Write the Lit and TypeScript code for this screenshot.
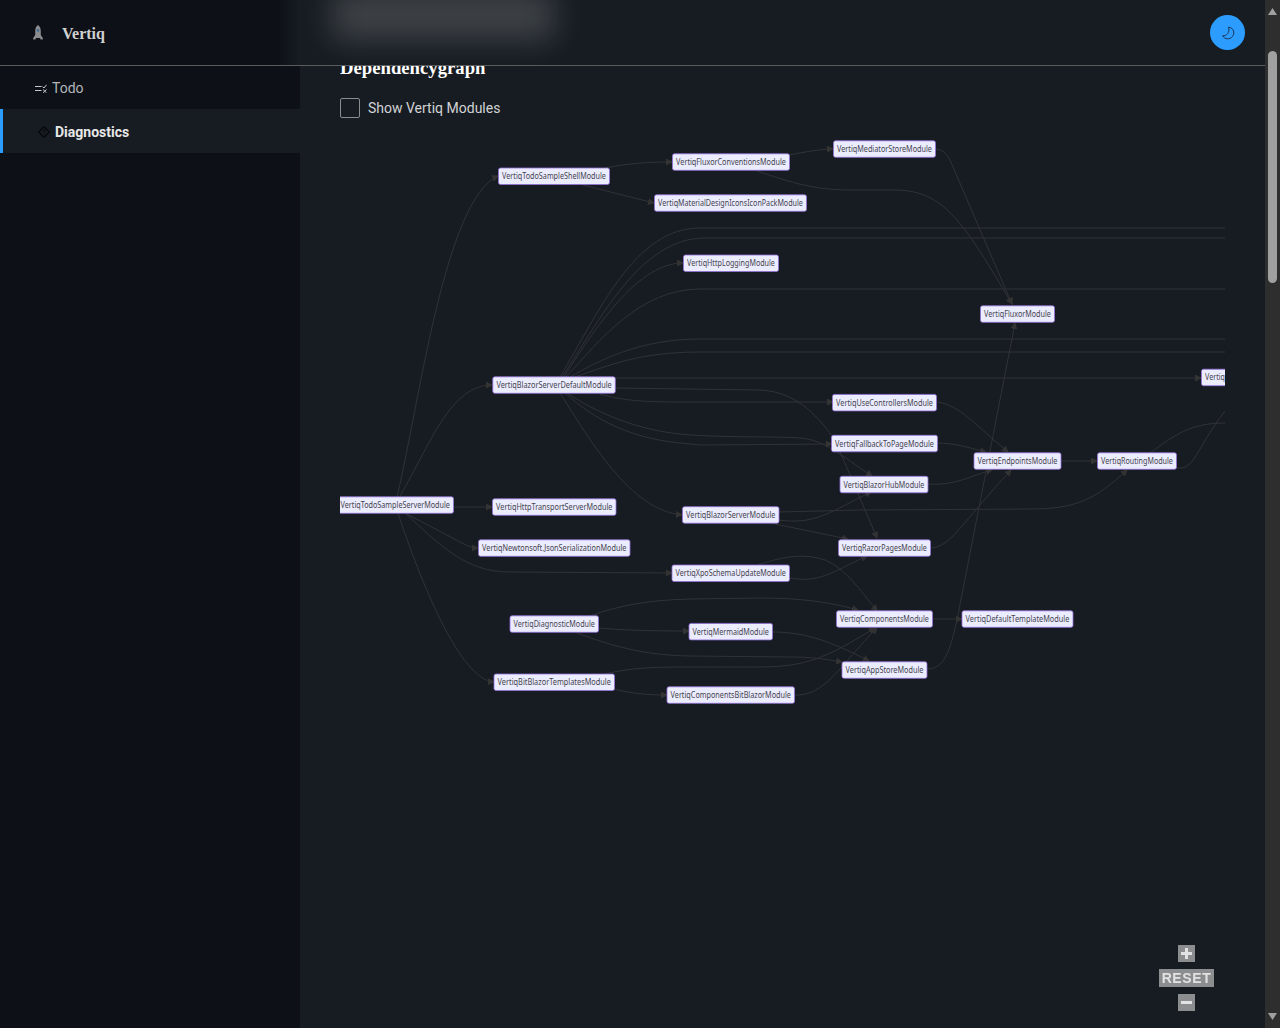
import { LitElement, html, css, svg } from "lit";
import { customElement } from "lit/decorators.js";

type N = [string, number, number, number, number];
const NODES: N[] = [
  ["VertiqTodoSampleShellModule", 498.5, 168, 111, 16.5],
  ["VertiqFluxorConventionsModule", 672.5, 153.8, 117, 16.5],
  ["VertiqMaterialDesignIconsIconPackModule", 654.5, 194.8, 152, 16.5],
  ["VertiqMediatorStoreModule", 833.5, 140.8, 102, 16.5],
  ["VertiqHttpLoggingModule", 683.5, 255, 95, 16.5],
  ["VertiqFluxorModule", 980.5, 305.8, 74, 16.5],
  ["VertiqBlazorServerDefaultModule", 492.8, 376.8, 122.5, 16.5],
  ["VertiqUseControllersModule", 832.5, 394.4, 104, 16.5],
  ["VertiqFallbackToPageModule", 831.5, 435.3, 106, 16.5],
  ["VertiqBlazorHubModule", 840, 476.3, 88, 16.5],
  ["VertiqEndpointsModule", 974, 452.8, 87, 16.5],
  ["VertiqRoutingModule", 1097.5, 452.8, 79, 16.5],
  ["VertiqTodoSampleServerModule", 337, 496.8, 116.5, 16.5],
  ["VertiqHttpTransportServerModule", 492.5, 498.8, 123.5, 16.5],
  ["VertiqBlazorServerModule", 682.5, 506.7, 96.5, 16.5],
  ["VertiqNewtonsoft.JsonSerializationModule", 478.5, 539.8, 151.5, 16.5],
  ["VertiqRazorPagesModule", 838.5, 539.8, 92, 16.5],
  ["VertiqXpoSchemaUpdateModule", 672, 565, 117.5, 16.5],
  ["VertiqDiagnosticModule", 510, 615.8, 88.5, 16.5],
  ["VertiqComponentsModule", 836.5, 610.8, 96, 16.5],
  ["VertiqDefaultTemplateModule", 962, 610.8, 111, 16.5],
  ["VertiqMermaidModule", 689, 623.4, 83.5, 16.5],
  ["VertiqAppStoreModule", 842, 661.8, 85, 16.5],
  ["VertiqBitBlazorTemplatesModule", 494, 674, 120.5, 16.5],
  ["VertiqComponentsBitBlazorModule", 667, 686.8, 127.5, 16.5],
];

const EDGES: string[] = [
  "M397 497C420 400 445 200 498 176",
  "M400 496C430 445 450 385 492 385",
  "M453 507L492 507",
  "M405 513L462 543Q470 548 478 548",
  "M405 513C440 545 465 572 510 572L672 573",
  "M398 513C420 580 460 680 494 682",
  "M605 168C630 163 650 162 672 162",
  "M583 185L654 203",
  "M789 155C805 152 820 149 833 149",
  "M757 171C785 180 810 190 850 190L895 190C945 190 965 225 1012 304",
  "M935 149Q945 149 950 160L1012 304",
  "M564 377C600 320 640 263 683 263",
  "M615 378L1201 378",
  "M600 394C620 400 640 402 680 402L833 402",
  "M615 388L760 390C800 392 820 420 835 440L877 538",
  "M567 393C600 415 640 430 680 434C720 438 770 436 800 438C825 440 840 455 872 476",
  "M565 393C595 420 630 438 680 443L700 445L832 444",
  "M560 393C590 440 630 510 682 515",
  "M779 512L860 510L1030 509C1075 509 1095 500 1127 470",
  "M779 520C815 525 830 512 871 492",
  "M770 523L848 539",
  "M928 484C955 486 970 476 992 470",
  "M789 578C820 583 830 573 867 556",
  "M757 565C780 558 800 552 825 560C845 568 860 590 877 611",
  "M930 548C950 548 960 525 1011 470",
  "M937 402C960 405 975 425 1008 452",
  "M937 443C955 443 970 448 986 452",
  "M1061 461L1097 461",
  "M927 669C945 669 950 650 957 620L1015 323",
  "M932 619L962 619",
  "M590 616C620 605 650 600 690 599L760 598C800 598 830 602 858 610",
  "M598 628C620 630 650 631 689 631",
  "M577 633C610 645 640 655 690 656L790 657C810 657 825 659 842 662",
  "M772 632C800 632 825 638 869 661",
  "M605 674C630 668 650 667 690 667L760 667C810 667 830 655 875 628",
  "M614 689C630 693 645 695 667 695",
  "M794 695C825 697 840 665 877 628",
];
const OPEN_EDGES: string[] = [
  "M1150 453C1175 435 1190 423 1225 423",
  "M1177 468C1195 470 1195 450 1225 411",
  "M560 377C600 310 635 228 700 228L1225 228",
  "M562 377C600 320 640 238 705 238L1225 238",
  "M566 377C600 340 640 289 700 289L1225 289",
  "M570 377C600 360 640 339 700 339L1225 339",
  "M575 377C610 365 640 352 700 352L1225 352",
];

@customElement("app-root")
export class AppRoot extends LitElement {
  static styles = css`
    :host { display: flex; width: 1280px; height: 1028px; overflow: hidden; background: #171c22; font-family: Roboto, "Noto Sans", sans-serif; }
    .page { flex: 1; min-width: 0; display: flex; flex-direction: column; }
    header { position: relative; z-index: 2; flex: 0 0 66px; height: 66px; box-sizing: border-box; display: flex; align-items: center; overflow: hidden; border-bottom: 1px solid #5a5c5e; background: #171c22; }
    .brand { position: relative; z-index: 1; flex: 0 0 300px; height: 100%; display: flex; align-items: center; box-sizing: border-box; padding: 0 0 0 33px; gap: 19px; background: linear-gradient(90deg, #0d1117 278px, #171c22 300px); }
    .brand svg { display: block; }
    .brand b { font: bold 16px "Liberation Serif", serif; color: #d0d0d0; position: relative; top: 1px; }
    .blob { position: absolute; left: 332px; top: -10px; width: 222px; height: 50px; background: rgba(255,255,255,.17); filter: blur(15px); }
    .moon { position: absolute; right: 20px; top: 15px; width: 35px; height: 35px; border-radius: 50%; background: #2d9cff; display: flex; align-items: center; justify-content: center; }
    .body { flex: 1; min-height: 0; display: flex; position: relative; }
    nav { flex: 0 0 300px; background: #0d1117; }
    .item { height: 43px; display: flex; align-items: center; box-sizing: border-box; color: #b4b6b9; font-size: 14px; padding-top: 1px; }
    .item.todo { padding-left: 35px; gap: 5px; }
    .item.active { height: 44px; background: #171c22; border-left: 3px solid #2d9cff; padding-left: 35px; gap: 5px; color: #e8e8e8; font-weight: 700; font-size: 14px; }
    main { flex: 1; min-width: 0; padding: 0 40px; position: relative; }
    h1 { margin: -10px 0 0; font: bold 18.72px/24px "Liberation Serif", serif; color: #fff; }
    .check { margin-top: 18px; display: flex; align-items: center; gap: 8px; color: #d2d3d5; font-size: 14px; height: 20px; }
    .box { width: 20px; height: 20px; box-sizing: border-box; border: 1px solid #8a8c8e; border-radius: 2px; }
    .graph { position: absolute; left: 40px; top: 0; width: 885px; height: 962px; overflow: hidden; }
    .graph svg { display: block; }
    .zoom { position: absolute; right: 51px; bottom: 17px; display: flex; flex-direction: column; align-items: center; gap: 7px; filter: blur(.3px); }
    .zbtn { background: #8b8d8f; color: #e2e2e2; display: flex; align-items: center; justify-content: center; }
    .zbtn.sq { width: 17px; height: 17px; }
    .zbtn.reset { width: 55px; height: 18px; font: bold 14px "Liberation Sans", sans-serif; letter-spacing: .6px; }
    .scroll { flex: 0 0 15px; background: #2e2e2e; position: relative; }
    .arrow { position: absolute; left: 3px; }
    .arrow.up { top: 8px; }
    .arrow.down { bottom: 8px; }
    .thumb { position: absolute; left: 3px; top: 51px; width: 9px; height: 232px; border-radius: 5px; background: #a0a0a0; }
    .node-text { font-family: "Noto Sans", sans-serif; font-size: 8.2px; fill: #44444c; }
  `;

  private graph() {
    const ox = 340, oy = 66;
    return html`<svg width="885" height="962" viewBox="${ox} ${oy} 885 962" xmlns="http://www.w3.org/2000/svg">
      <defs>
        <marker id="ah" markerUnits="userSpaceOnUse" markerWidth="7" markerHeight="7" refX="6" refY="3.5" orient="auto">
          <path d="M0 0L7 3.5L0 7Z" fill="#333"></path>
        </marker>
      </defs>
      ${EDGES.map((d) => svg`<path d=${d} fill="none" stroke="#303236" stroke-width="1" marker-end="url(#ah)"></path>`)}
      ${OPEN_EDGES.map((d) => svg`<path d=${d} fill="none" stroke="#303236" stroke-width="1"></path>`)}
      ${NODES.map(([t, x, y, w, h]) => svg`
        <rect x=${x} y=${y} width=${w} height=${h} rx="2" fill="#ececff" stroke="#9370db" stroke-width=".8"></rect>
        <text class="node-text" x=${x + 3.6} y=${y + 11.2} textLength=${w - 7.2} lengthAdjust="spacingAndGlyphs">${t}</text>`)}
      <rect x="1201.5" y="369.2" width="60" height="16.5" rx="2" fill="#ececff" stroke="#9370db" stroke-width=".8"></rect>
      <text class="node-text" x="1205" y="380.4" textLength="20" lengthAdjust="spacingAndGlyphs">Vertiq</text>
    </svg>`;
  }

  render() {
    return html`
      <div class="page">
        <header>
          <div class="brand">
            <svg width="10" height="15" viewBox="0 0 10 15">
              <path d="M5 0C7 1.4 7.8 3.6 7.8 6V10L9.8 13V14.5H7.6L7 13H3L2.4 14.5H.2V13L2.2 10V6C2.2 3.6 3 1.4 5 0Z" fill="#8a8c8e"></path>
              <circle cx="5" cy="5.4" r="1.3" fill="#3f6d96"></circle>
            </svg>
            <b>Vertiq</b>
          </div>
          <div class="blob"></div>
          <div class="moon">
            <svg width="14" height="14" viewBox="0 0 14 14" fill="none" stroke="#1a3555" stroke-width="1">
              <path d="M7.5 1.2C11 1.4 13 4 12.8 7C12.6 10.4 9.8 12.9 6.6 12.8C4.4 12.7 2.6 11.6 1.6 9.8C5.6 10.4 9.2 6.2 7.5 1.2Z"></path>
            </svg>
          </div>
        </header>
        <div class="body">
          <nav>
            <div class="item todo">
              <svg width="12" height="9" viewBox="0 0 12 9" fill="none" stroke="#c4c6c8" stroke-width="1">
                <path d="M0 2.5H6.5M0 6.5H6.5M7.5 2.5L9 4L11.5 .8M8 5.5L11.5 8.8M11.5 5.5L8 8.8"></path>
              </svg>
              <span>Todo</span>
            </div>
            <div class="item active">
              <svg width="12" height="12" viewBox="0 0 12 12" fill="none" stroke="#05070a" stroke-width="1.1">
                <path d="M6 .6L11.4 6L6 11.4L.6 6Z"></path>
                <path d="M4.8 4.7C5 3.6 7.2 3.6 7.2 4.9C7.2 5.8 6 5.8 6 6.9M6 7.6V8.4" stroke-width=".7"></path>
              </svg>
              <span>Diagnostics</span>
            </div>
          </nav>
          <main>
            <div class="graph">${this.graph()}</div>
            <h1>Dependencygraph</h1>
            <div class="check"><span class="box"></span><span>Show Vertiq Modules</span></div>
            <div class="zoom">
              <div class="zbtn sq">
                <svg width="13" height="13" viewBox="0 0 13 13"><path d="M5 1H8V5H12V8H8V12H5V8H1V5H5Z" fill="#e2e2e2"></path></svg>
              </div>
              <div class="zbtn reset">RESET</div>
              <div class="zbtn sq">
                <svg width="13" height="13" viewBox="0 0 13 13"><path d="M1 5H12V8H1Z" fill="#e2e2e2"></path></svg>
              </div>
            </div>
          </main>
        </div>
      </div>
      <div class="scroll">
        <svg class="arrow up" width="9" height="7" viewBox="0 0 9 7"><path d="M4.5 0L9 7H0Z" fill="#a0a0a0"></path></svg>
        <div class="thumb"></div>
        <svg class="arrow down" width="9" height="7" viewBox="0 0 9 7"><path d="M0 0H9L4.5 7Z" fill="#a0a0a0"></path></svg>
      </div>
    `;
  }
}
